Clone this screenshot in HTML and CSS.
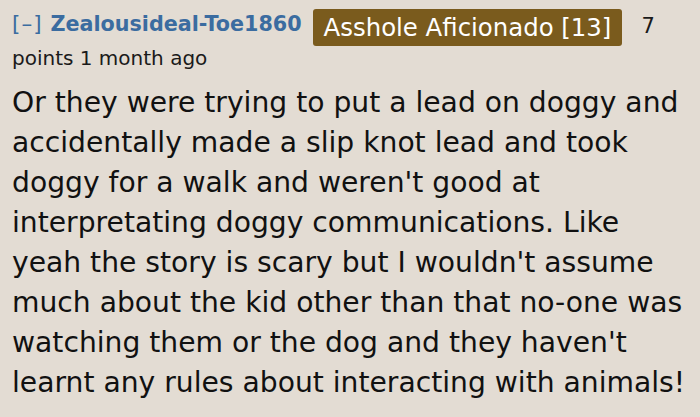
FILE: index.html
```html
<!DOCTYPE html>
<html>
<head>
<meta charset="utf-8">
<link rel="stylesheet" href="styles.css">
</head>
<body>
<div class="comment">
  <p class="tagline"><span class="toggle">[&ndash;]</span><span class="author">Zealousideal-Toe1860</span><span class="flair">Asshole Aficionado [13]</span><span class="score">7</span> points 1 month ago</p>
  <p class="body">Or they were trying to put a lead on doggy and accidentally made a slip knot lead and took doggy for a walk and weren't good at interpretating doggy communications. Like yeah the story is scary but I wouldn't assume much about the kid other than that no-one was watching them or the dog and they haven't learnt any rules about interacting with animals!</p>
</div>
</body>
</html>
```
FILE: styles.css
```css
html, body {
  margin: 0;
  padding: 0;
  background: #e3dcd3;
}
.comment {
  padding: 8px 11px 0 12px;
  font-family: "DejaVu Sans", Verdana, sans-serif;
  color: #111;
}
.tagline {
  margin: 0;
  font-size: 20px;
  line-height: 33.5px;
  color: #1a1a1a;
}
.toggle {
  color: #3b6ca0;
  font-size: 21.5px;
  line-height: 1;
  letter-spacing: 1px;
  margin-right: 8px;
}
.author {
  color: #3b6ca0;
  font-weight: bold;
  font-size: 20.7px;
  line-height: 1;
  margin-right: 11px;
}
.flair {
  background: #7a5b1d;
  color: #fff;
  font-size: 24.4px;
  line-height: 1;
  padding: 4px 11px;
  border-radius: 3px;
  vertical-align: -5px;
  margin-right: 19px;
}
.score {
  font-size: 21px;
  line-height: 1;
  vertical-align: -2px;
}
.body {
  margin: 8px 0 0 0;
  font-size: 28.2px;
  line-height: 40px;
  color: #111;
}
```
